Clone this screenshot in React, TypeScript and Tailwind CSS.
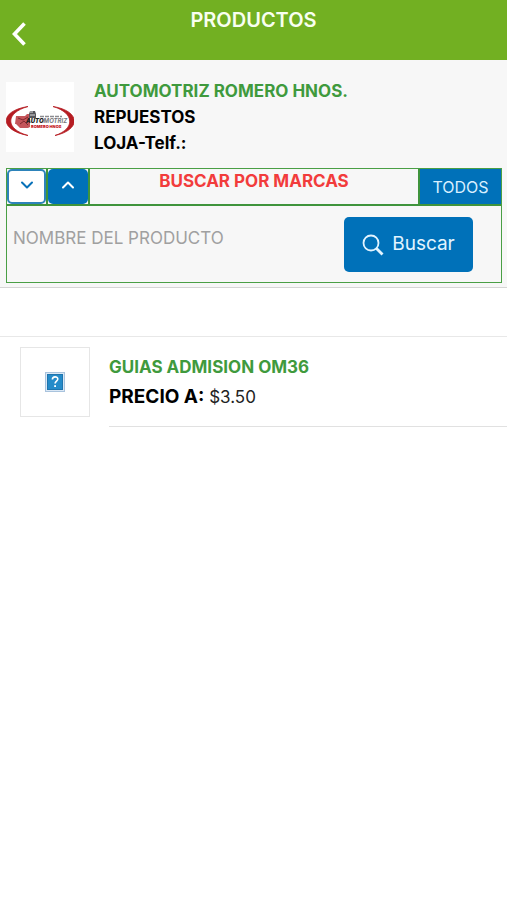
import { ChevronDown, ChevronUp } from "lucide-react";

function CompanyLogo() {
  return (
    <svg viewBox="0 0 68 70" className="h-[70px] w-[68px] shrink-0 bg-white" role="img" aria-label="Automotriz Romero Hnos.">
      <path d="M22 24.5C-7 29-7 48 22 53.5C-1 47-1 31 22 24.5Z" fill="#b51c22" stroke="#b51c22" strokeWidth="0.8" />
      <path d="M47 24.5C75 29 75 48 49 53.5C69 47 69 31 47 24.5Z" fill="#b51c22" stroke="#b51c22" strokeWidth="0.8" />
      <path d="M10 34h9l2-2h3v13l-2 1H14l-4-4H9z" fill="#c4555a" />
      <path d="M12 36l5 2 5-3M14 42l4-3 4 4" fill="none" stroke="#7f2830" strokeWidth="1" />
      <path d="M23 32l1-3h5l1 3v4h-7z" fill="#55555a" />
      <path d="M24 30h3M24 33h5" stroke="#ddd" strokeWidth="1" />
      <path d="M34 34.5h22" stroke="#8c8c90" strokeWidth="1.6" strokeDasharray="4 1" />
      <text x="20" y="41" fontFamily="Inter, sans-serif" fontSize="6" fontWeight="900" fontStyle="italic" fill="#222">AUTO<tspan fill="#77777b" fontWeight="700">MOTRIZ</tspan></text>
      <text x="25" y="46" fontFamily="Inter, sans-serif" fontSize="4" fontWeight="900" fill="#c5161d">ROMERO HNOS</text>
    </svg>
  );
}

function MissingImage() {
  return (
    <svg viewBox="0 0 20 20" className="size-5" role="img" aria-label="Imagen no disponible">
      <rect x="0.5" y="0.5" width="19" height="19" fill="#dbe8f5" stroke="#a9c3dd" />
      <rect x="2.5" y="2.5" width="15" height="15" fill="#258bc9" stroke="#1f75ae" />
      <path d="M7.4 7.6c0-3.7 5.4-3.5 5.4-.5 0 2-2.7 2.1-2.7 4.4" fill="none" stroke="#fff" strokeWidth="1.6" />
      <rect x="9.2" y="13.2" width="1.8" height="1.8" fill="#fff" />
    </svg>
  );
}

export default function App() {
  return (
    <div className="min-h-screen bg-white font-['Inter',sans-serif] text-black">
      <header className="grid h-[60px] grid-cols-[40px_1fr_40px] bg-[#72b022]">
        <button type="button" aria-label="Volver" className="flex items-center pt-2 pl-3 text-white">
          <svg viewBox="0 0 14 24" className="h-6 w-[14px]" fill="none" stroke="currentColor" strokeWidth="3.6">
            <path d="M12.5 1.5 2.5 12l10 10.5" />
          </svg>
        </button>
        <h1 className="pt-1.5 text-center text-xl leading-7 font-semibold text-[#f8fff0]">PRODUCTOS</h1>
      </header>

      <section className="border-b border-[#d5d5d5] bg-[#f7f7f7] pt-[18px] pr-[5px] pb-1 pl-1.5">
        <div className="flex items-center gap-5">
          <CompanyLogo />
          <div className="text-[17px] leading-[26px] font-bold">
            <h2 className="text-[#3f9a3d]">AUTOMOTRIZ ROMERO HNOS.</h2>
            <p>REPUESTOS</p>
            <p>LOJA-Telf.:</p>
          </div>
        </div>

        <form className="mt-3 border border-[#4a9f45]" onSubmit={(e) => e.preventDefault()}>
          <div className="flex h-[37px] border-b-2 border-[#3f943c]">
            <div className="w-10 border-r border-[#3f943c]">
              <button type="button" aria-label="Mostrar marcas" className="flex size-full items-center justify-center rounded-[5px] border-2 border-[#2d83ba] bg-white pb-1 text-[#0871b9]">
                <ChevronDown size={20} strokeWidth={2.4} />
              </button>
            </div>
            <div className="w-[43px] border-r-2 border-l border-[#3f943c]">
              <button type="button" aria-label="Ocultar marcas" className="flex size-full items-center justify-center rounded-[5px] bg-[#0071b9] pb-1 text-white">
                <ChevronUp size={20} strokeWidth={2.4} />
              </button>
            </div>
            <p className="flex-1 text-center text-[17px] leading-6 font-bold text-[#f23c3c]">BUSCAR POR MARCAS</p>
            <button type="button" className="w-[83px] border-l-2 border-[#3f943c] bg-[#0071b9] text-base text-[#d8efff]">TODOS</button>
          </div>
          <div className="flex items-start pt-[11px] pr-7 pb-2.5">
            <input
              type="text"
              aria-label="Nombre del producto"
              placeholder="NOMBRE DEL PRODUCTO"
              className="h-[42px] min-w-0 flex-1 bg-transparent px-1.5 text-[17px] outline-none placeholder:text-[#a0a0a0]"
            />
            <button type="submit" className="flex h-[55px] w-[129px] items-center justify-center gap-2 rounded-[5px] bg-[#0071b9] text-[19px] text-[#e2f4ff]">
              <svg viewBox="0 0 22 22" className="size-[22px]" fill="none" stroke="currentColor">
                <circle cx="9" cy="9" r="7.5" strokeWidth="1.8" />
                <path d="m14.5 14.5 6 6" strokeWidth="2.8" />
              </svg>
              Buscar
            </button>
          </div>
        </form>
      </section>

      <main className="pt-12">
        <ul className="border-t border-[#e8e8e8]">
          <li className="flex gap-[19px] pl-5">
            <div className="mt-2.5 flex size-[70px] shrink-0 items-center justify-center border border-[#e6e6e6]">
              <MissingImage />
            </div>
            <div className="h-[90px] flex-1 border-b border-[#e1e1e1] pt-4">
              <h3 className="text-[17px] leading-7 font-bold text-[#3f9a3d]">GUIAS ADMISION OM36</h3>
              <p className="text-[17px] leading-8 text-[#222]">
                <strong className="text-[19px] font-bold text-black">PRECIO A:</strong> $3.50
              </p>
            </div>
          </li>
        </ul>
      </main>
    </div>
  );
}
